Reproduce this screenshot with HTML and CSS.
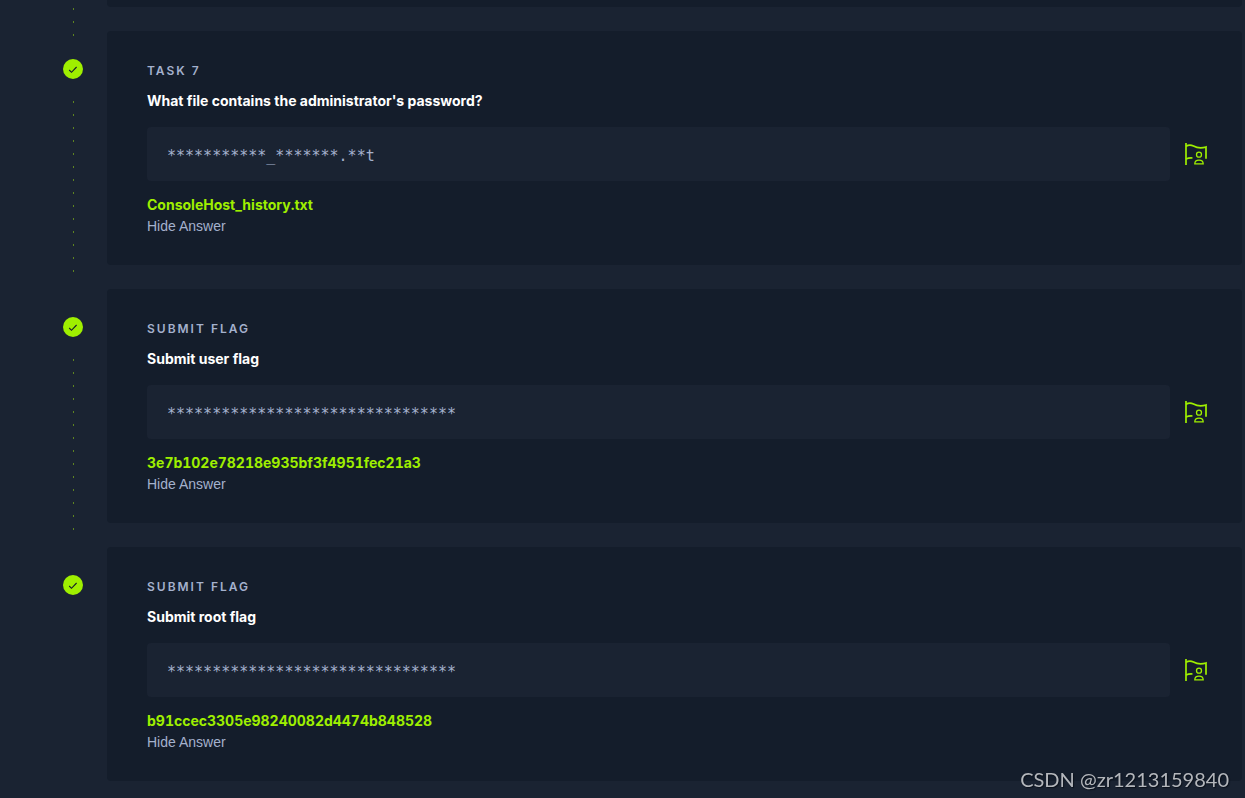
FILE: index.html
```html
<!DOCTYPE html>
<html lang="en">
<head>
    <meta charset="UTF-8">
    <meta name="viewport" content="width=device-width, initial-scale=1.0">
    <title>Tasks</title>
    <link rel="stylesheet" href="styles.css">
</head>
<body>
    <!-- Shared icons -->
    <svg class="sprite" aria-hidden="true">
        <symbol id="icon-check" viewBox="0 0 20 20">
            <path d="M6.200 11l2.300 2.300L13.600 8" fill="none" stroke="#141d2b" stroke-width="1.100"/>
        </symbol>
        <symbol id="icon-flag" viewBox="0 0 24 24">
            <g fill="none" stroke="currentColor" stroke-width="1.700">
                <path d="M2 1v22"/>
                <path d="M2 4.200c2.500-1.500 5-1.500 7.500-.200 4 2.200 8 2.300 12.500 1V16.800"/>
                <path d="M2 17c2-.900 4.200-1.200 6.500-1"/>
                <circle cx="15" cy="12.700" r="2.500" stroke-width="1.300"/>
                <path d="M10.800 21.900c0-2.600 1.800-3.800 4.200-3.800s4.200 1.200 4.200 3.800z" stroke-width="1.300"/>
            </g>
        </symbol>
    </svg>

    <main class="tasks">
        <!-- End of the previous task -->
        <div class="task task-previous">
            <div class="rail"><span class="dots"></span></div>
            <div class="card"></div>
        </div>

        <section class="task">
            <div class="rail">
                <span class="check"><svg><use href="#icon-check"/></svg></span>
                <span class="dots"></span>
            </div>
            <div class="card">
                <h2 class="task-label">Task 7</h2>
                <label class="question" for="task7">What file contains the administrator's password?</label>
                <div class="answer-row">
                    <input class="answer-input" type="text" id="task7" placeholder="***********_*******.**t">
                    <button class="flag-button" type="button" aria-label="Submit answer"><svg><use href="#icon-flag"/></svg></button>
                </div>
                <p class="answer">ConsoleHost_history.txt</p>
                <button class="hide-answer" type="button">Hide Answer</button>
            </div>
        </section>

        <section class="task">
            <div class="rail">
                <span class="check"><svg><use href="#icon-check"/></svg></span>
                <span class="dots"></span>
            </div>
            <div class="card">
                <h2 class="task-label">Submit Flag</h2>
                <label class="question" for="userFlag">Submit user flag</label>
                <div class="answer-row">
                    <input class="answer-input" type="text" id="userFlag" placeholder="********************************">
                    <button class="flag-button" type="button" aria-label="Submit user flag"><svg><use href="#icon-flag"/></svg></button>
                </div>
                <p class="answer">3e7b102e78218e935bf3f4951fec21a3</p>
                <button class="hide-answer" type="button">Hide Answer</button>
            </div>
        </section>

        <section class="task">
            <div class="rail">
                <span class="check"><svg><use href="#icon-check"/></svg></span>
            </div>
            <div class="card">
                <h2 class="task-label">Submit Flag</h2>
                <label class="question" for="rootFlag">Submit root flag</label>
                <div class="answer-row">
                    <input class="answer-input" type="text" id="rootFlag" placeholder="********************************">
                    <button class="flag-button" type="button" aria-label="Submit root flag"><svg><use href="#icon-flag"/></svg></button>
                </div>
                <p class="answer">b91ccec3305e98240082d4474b848528</p>
                <button class="hide-answer" type="button">Hide Answer</button>
            </div>
        </section>
    </main>

    <div class="watermark">CSDN @zr1213159840</div>
</body>
</html>
```
FILE: styles.css
```css
/* Global styles */
body {
    font-family: Inter, "Liberation Sans", Arial, sans-serif;
    margin: 0;
    background-color: #1a2332;
    color: #fff;
}

.sprite {
    display: none;
}

.tasks {
    padding: 0 3px 0 63px;
}

.task {
    display: flex;
    gap: 24px;
    margin-bottom: 24px;
}

.task:last-child {
    margin-bottom: 0;
}

/* Progress rail on the left */
.rail {
    display: flex;
    flex-direction: column;
    align-items: center;
    width: 20px;
    padding-top: 28px;
    box-sizing: border-box;
}

.check {
    width: 20px;
    height: 20px;
    border-radius: 50%;
    background-color: #9fef00;
}

.check svg {
    display: block;
    width: 20px;
    height: 20px;
}

.dots {
    flex: 1;
    width: 1px;
    margin: 22px 0 -8px 1px;
    background: repeating-linear-gradient(#5d8420 0 2px, transparent 2px 13px);
}

/* Task card */
.card {
    flex: 1;
    min-width: 0;
    padding: 32px 32px 28px 40px;
    border-radius: 4px;
    background-color: #141d2b;
}

.task-previous .rail {
    padding-top: 0;
}

.task-previous .dots {
    flex: none;
    height: 28px;
    margin: 8px 0 -29px 1px;
}

.task-previous .card {
    padding: 7px 0 0;
    border-radius: 0 0 4px 4px;
    align-self: flex-start;
}

.task-label {
    margin: 0 0 12px;
    font-size: 12px;
    font-weight: 600;
    line-height: 16px;
    letter-spacing: 2px;
    text-transform: uppercase;
    color: #a4b1cd;
}

.question {
    display: block;
    margin-bottom: 16px;
    font-size: 14px;
    font-weight: bold;
    line-height: 20px;
}

.answer-row {
    display: flex;
    align-items: center;
    gap: 12px;
}

.answer-input {
    flex: 1;
    min-width: 0;
    height: 54px;
    padding: 4px 20px 0;
    box-sizing: border-box;
    border: none;
    border-radius: 4px;
    background-color: #1a2332;
    color: #a4b1cd;
    font-family: "DejaVu Sans Mono", monospace;
    font-size: 15px;
}

.answer-input::placeholder {
    color: #a4b1cd;
    opacity: 1;
}

.flag-button {
    padding: 2px;
    border: none;
    background: none;
    color: #9fef00;
    cursor: pointer;
}

.flag-button svg {
    display: block;
    width: 24px;
    height: 24px;
}

.answer {
    margin: 14px 0 0;
    font-size: 14px;
    font-weight: bold;
    font-variant-numeric: tabular-nums;
    line-height: 20px;
    color: #9fef00;
}

.hide-answer {
    display: block;
    padding: 0;
    border: none;
    background: none;
    color: #a4b1cd;
    font-family: "Liberation Sans", Arial, sans-serif;
    font-size: 14px;
    line-height: 22px;
    cursor: pointer;
}

.watermark {
    position: fixed;
    right: 16px;
    bottom: 7px;
    font-family: Lato, "Liberation Sans", sans-serif;
    font-size: 20px;
    line-height: 24px;
    color: #b4b7bc;
    text-shadow: 1px 1px 1px #0b111b;
}
```
